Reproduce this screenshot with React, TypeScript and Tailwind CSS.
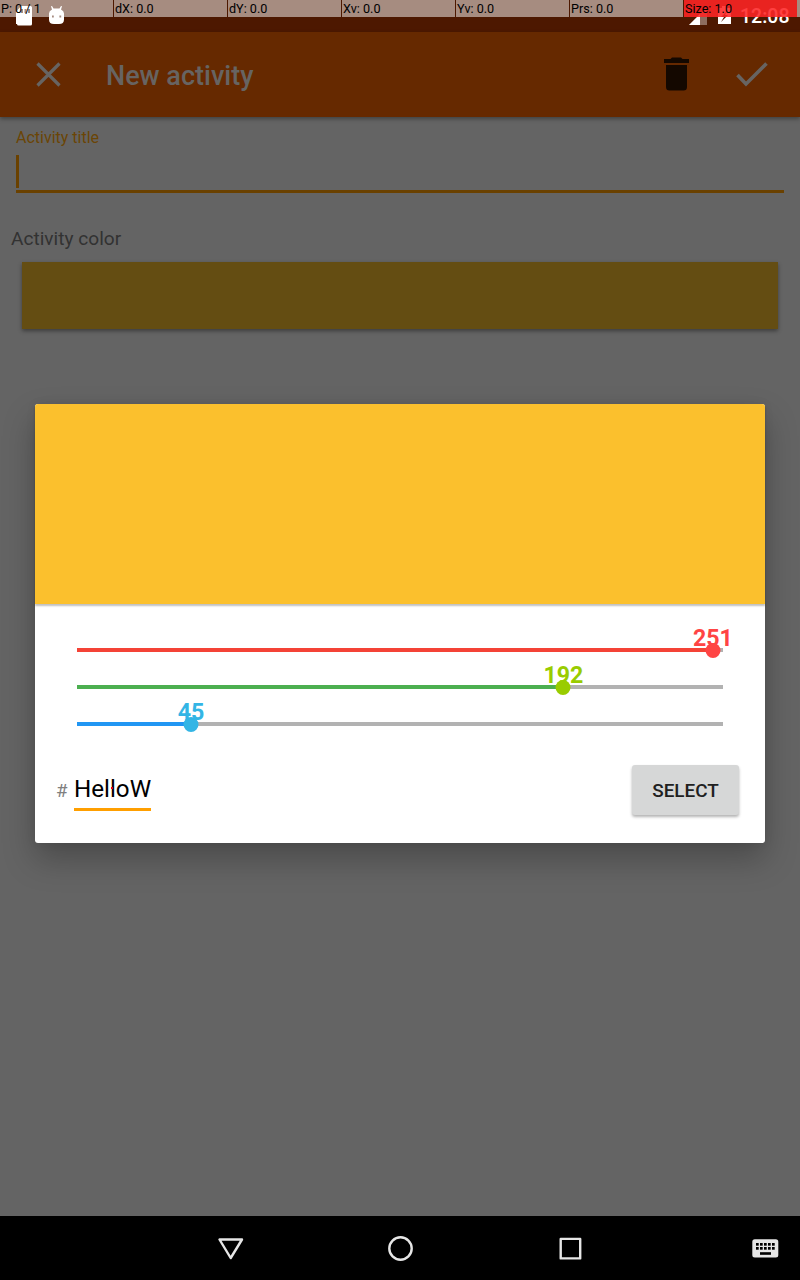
import type { ReactNode } from "react";

const pointerStats = ["P: 0 / 1", "dX: 0.0", "dY: 0.0", "Xv: 0.0", "Yv: 0.0", "Prs: 0.0"];

function PointerOverlay() {
  return (
    <div className="absolute inset-x-0 top-0 flex h-[17px] text-[12.600px] leading-[17px] text-black">
      {pointerStats.map((stat) => (
        <div key={stat} className="mr-px w-[113px] bg-white/50 pl-px whitespace-pre">
          {stat}
        </div>
      ))}
      <div className="w-[113px] bg-white/50">
        <div className="h-full bg-[#ff0000]/75 pl-px">Size: 1.0</div>
      </div>
      <div className="flex-1 bg-white/50" />
    </div>
  );
}

function StatusBar() {
  return (
    <header className="relative h-8 bg-[#4d1800]">
      <div className="flex h-8 justify-between">
        <svg width="80" height="32" viewBox="0 0 80 32" fill="#fff">
          <path fillRule="evenodd" d="M21 6h9.500q1.500 0 1.500 1.500v16.500q0 1.500-1.500 1.500h-12q-1.500 0-1.500-1.500h-1V12zM21 9v4h2V9zM24.500 9v4h2V9zM28 9v4h2V9z" />
          <path fillRule="evenodd" d="M49 13.500q0-2.500 3-4L51 6.300l1-.3L53.500 8.500h6L61 6l1 .3L61 9.500q3 1.500 3 4v6q0 4.500-5 4.500h-5q-5 0-5-4.500zM52 15.500v1.800h1.800v-1.800zM59.400 15.500v1.800h1.800v-1.800z" />
        </svg>
        <div className="flex">
          <svg width="60" height="32" viewBox="0 0 60 32">
            <path d="M27 7v18H9z" fill="#fff" opacity=".3" />
            <path d="M20 14v11H9z" fill="#fff" />
            <path d="M20 14l7-7v18h-7z" fill="#fff" opacity=".1" />
            <path fillRule="evenodd" d="M38 8h4V6h5v2h4v16H38zM47 11l-6 6h3l-3 5 7-7h-3z" fill="#fff" />
          </svg>
          <span className="w-[60px] text-[19.500px] leading-[34px] font-medium whitespace-nowrap text-white">12:08</span>
        </div>
      </div>
      <PointerOverlay />
    </header>
  );
}

function Toolbar() {
  return (
    <div className="relative flex h-[85px] items-center bg-[#662900] shadow-[0_2px_4px_rgba(0,0,0,0.35)]">
      <svg className="ml-9" width="25" height="26" viewBox="0 0 25 26" fill="none" stroke="#676462" strokeWidth="3.200">
        <path d="M1.500 1.500l22 22M23.500 1.500l-22 22" />
      </svg>
      <h1 className="ml-[45px] pt-[3px] text-[27px] leading-8 font-medium text-[#676462]">New activity</h1>
      <svg className="mb-[2px] ml-auto" width="26" height="34" viewBox="0 0 26 34" fill="#140800">
        <path d="M0 2h6.500L8 0.500h9L18.500 2H25v4H0zM2 8h21v22q0 3.500-3.500 3.500h-14Q2 33.500 2 30z" />
      </svg>
      <svg className="mr-8 ml-[46px]" width="32" height="26" viewBox="0 0 32 26" fill="none" stroke="#676462" strokeWidth="3.600">
        <path d="M1.500 13l8.500 9L30.500 1.500" />
      </svg>
    </div>
  );
}

function ActivityForm() {
  return (
    <main className="flex-1">
      <div className="mx-4 h-[76px] border-b-[3px] border-[#6a4100] pt-[11px]">
        <div className="text-[16px] leading-5 text-[#6b4505]">Activity title</div>
        <div className="mt-[7px] h-[33px] w-[3px] bg-[#6a4100]" />
      </div>
      <div className="mt-[34px] ml-[11px] text-[19.100px] leading-6 text-[#323232]">Activity color</div>
      <div className="mx-[22px] mt-[11px] h-[67px] bg-[#644d12] shadow-[0_2px_4px_rgba(0,0,0,0.4)]" />
    </main>
  );
}

type SliderProps = { value: number; barClass: string; thumbClass: string; labelClass: string };

function ChannelSlider({ value, barClass, thumbClass, labelClass }: SliderProps) {
  const position = `${(value / 255) * 100}%`;
  return (
    <div className="h-[37px]">
      <div className="relative h-1 bg-[#b2b2b2]">
        <div className={`h-full ${barClass}`} style={{ width: position }} />
        <div className="absolute top-[-24px] -translate-x-1/2" style={{ left: position }}>
          <div className={`text-[23.200px] leading-[28px] font-bold ${labelClass}`}>{value}</div>
        </div>
        <div
          className={`absolute top-[-5px] size-[15px] -translate-x-1/2 rounded-full ${thumbClass}`}
          style={{ left: position }}
        />
      </div>
    </div>
  );
}

function ColorDialog() {
  return (
    <section className="absolute top-[404px] left-[35px] flex h-[439px] w-[730px] flex-col overflow-visible rounded-[3px] bg-white shadow-[0_16px_32px_rgba(0,0,0,0.26),0_0_10px_rgba(0,0,0,0.08)]">
      <div className="h-[200px] rounded-t-[3px] bg-[#fbc02d] shadow-[0_2px_2px_rgba(0,0,0,0.25)]" />
      <div className="mx-[42px] mt-11 h-[111px]">
        <ChannelSlider value={251} barClass="bg-[#f44336]" thumbClass="bg-[#ff4444]" labelClass="text-[#ff4444]" />
        <ChannelSlider value={192} barClass="bg-[#4caf50]" thumbClass="bg-[#99cc00]" labelClass="text-[#99cc00]" />
        <ChannelSlider value={45} barClass="bg-[#2196f3]" thumbClass="bg-[#33b5e5]" labelClass="text-[#33b5e5]" />
      </div>
      <div className="mt-[6px] mr-[26px] ml-[21px] flex items-start">
        <span className="mt-[15px] w-[18px] text-[18.700px] leading-[22px] text-[#808080]">#</span>
        <div className="relative h-[46px] w-[77px] border-b-[3px] border-[#ff9f00] pt-[9px] text-[24.200px] leading-[30px] whitespace-nowrap text-black">
          HelloW
          <span className="absolute top-[22px] left-[37px] size-[2px] bg-red-600" />
        </div>
        <button className="ml-auto h-[50px] w-[107px] rounded-[3px] bg-[#d6d7d7] pt-[2px] text-[18.900px] font-medium text-[#202020] shadow-[0_2px_3px_rgba(0,0,0,0.3)]">
          SELECT
        </button>
      </div>
    </section>
  );
}

function NavIcon({ children, className }: { children: ReactNode; className: string }) {
  return (
    <svg className={className} width="28" height="28" viewBox="0 0 28 28" fill="none" stroke="#e6e6e6" strokeWidth="2.400" strokeLinejoin="round">
      {children}
    </svg>
  );
}

function NavigationBar() {
  const keys = [5, 9, 13, 17, 21];
  return (
    <nav className="flex h-16 items-center bg-black">
      <NavIcon className="ml-[217px]">
        <path d="M2.500 5.500h22.500L13.700 24z" />
      </NavIcon>
      <NavIcon className="ml-[141px]">
        <circle cx="14.500" cy="14.500" r="11.200" />
      </NavIcon>
      <NavIcon className="ml-[142px]">
        <rect x="4.700" y="4.900" width="19.500" height="19.500" />
      </NavIcon>
      <svg className="mr-[21px] ml-auto" width="28" height="20" viewBox="0 0 28 20">
        <rect x="1.300" y="1.200" width="26" height="18.300" rx="2.500" fill="#e6e6e6" />
        {keys.map((x) => (
          <g key={x} fill="#000">
            <rect x={x} y="5" width="2.700" height="2.700" />
            <rect x={x} y="9" width="2.700" height="2.700" />
          </g>
        ))}
        <rect x="9" y="14.200" width="11" height="2.600" fill="#000" />
      </svg>
    </nav>
  );
}

export default function App() {
  return (
    <div className="relative flex h-[1280px] w-[800px] flex-col overflow-hidden bg-[#646464] font-['Roboto',sans-serif]">
      <StatusBar />
      <Toolbar />
      <ActivityForm />
      <NavigationBar />
      <ColorDialog />
    </div>
  );
}
